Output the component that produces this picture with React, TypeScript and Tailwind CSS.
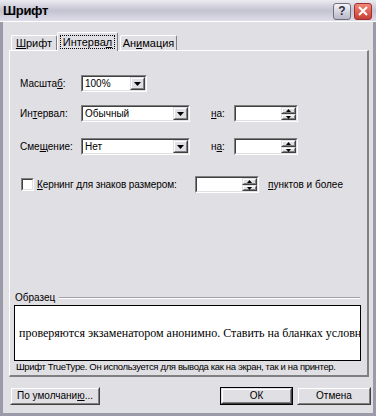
import React from "react";

type Kids = { children?: React.ReactNode; className?: string };

const U = ({ children }: Kids) => <span className="underline underline-offset-[1px]">{children}</span>;

const Down = () => (
  <svg width="7" height="4" viewBox="0 0 7 4">
    <path d="M0 0h7L3.5 4z" fill="#000" />
  </svg>
);

// classic sunken field
const Sunken = ({ children, className }: Kids) => (
  <div className={`border border-t-[#808080] border-l-[#808080] border-b-white border-r-white ${className}`}>
    <div className="h-full flex items-stretch border border-t-[#404040] border-l-[#404040] border-b-[#e0dfe3] border-r-[#e0dfe3] bg-white">
      {children}
    </div>
  </div>
);

// classic raised button face
const Raised = ({ children, className }: Kids) => (
  <div className={`border border-t-[#e0dfe3] border-l-[#e0dfe3] border-b-[#404040] border-r-[#404040] ${className}`}>
    <div className="h-full flex items-center justify-center border border-t-white border-l-white border-b-[#808080] border-r-[#808080] bg-[#e0dfe3]">
      {children}
    </div>
  </div>
);

const Combo = ({ value, className }: { value: string; className: string }) => (
  <Sunken className={`h-[17px] ${className}`}>
    <span className="flex-1 pl-[2px] leading-[13px]">{value}</span>
    <Raised className="w-[15px]">
      <Down />
    </Raised>
  </Sunken>
);

const Spin = ({ className }: Kids) => (
  <Sunken className={`h-[17px] ${className}`}>
    <span className="flex-1" />
    <div className="w-[15px] flex flex-col">
      <Raised className="h-[7px]">
        <svg width="5" height="3" viewBox="0 0 7 4">
          <path d="M0 4h7L3.5 0z" fill="#000" />
        </svg>
      </Raised>
      <Raised className="h-[6px]">
        <svg width="5" height="3" viewBox="0 0 7 4">
          <path d="M0 0h7L3.5 4z" fill="#000" />
        </svg>
      </Raised>
    </div>
  </Sunken>
);

const Button = ({ children, className, def }: Kids & { def?: boolean }) => (
  <div className={`h-[18px] ${def ? "border border-black" : ""} ${className}`}>
    <Raised className="h-full">
      <span className="leading-[12px]">{children}</span>
    </Raised>
  </div>
);

export default function App() {
  return (
    <div className="w-[376px] h-[416px] flex flex-col bg-[#e0dfe3] text-[10px] text-black font-['Liberation_Sans',Arial,sans-serif] overflow-hidden">
      {/* title bar */}
      <div className="h-[22px] flex items-center justify-between pl-[3px] pr-[4px] bg-linear-to-b from-[#ecebf1] via-[#c3c3d1] to-[#dedde8] border-b border-white">
        <span className="text-[13px] font-bold tracking-[-0.3px]">Шрифт</span>
        <div className="flex gap-[3px] pt-[1px]">
          <div className="w-[18px] h-[17px] rounded-[3px] border border-[#707080] bg-linear-to-b from-[#f4f4f8] to-[#b8b8c8] flex items-center justify-center text-[12px] font-bold text-[#303040]">
            ?
          </div>
          <div className="w-[18px] h-[17px] rounded-[3px] border border-[#a03030] bg-linear-to-b from-[#f08878] to-[#c83c34] flex items-center justify-center">
            <svg width="10" height="10" viewBox="0 0 10 10">
              <path d="M1 1L9 9M9 1L1 9" stroke="#fff" strokeWidth="2" />
            </svg>
          </div>
        </div>
      </div>

      {/* window body with frame */}
      <div className="flex-1 flex flex-col border-x-[3px] border-b-[3px] border-x-[#9a9aa8] border-b-[#9a9aa8]">
        {/* tabs */}
        <div className="mt-[10px] ml-[8px] h-[18px] flex items-end">
          <div className="h-[15px] w-[46px] flex items-center justify-center border border-b-0 border-t-white border-l-white border-r-[#808080] bg-[#e0dfe3] rounded-t-[2px]">
            <span className="text-[11px]">
              <U>Ш</U>рифт
            </span>
          </div>
          <div className="relative z-10 -mb-px h-[19px] w-[61px] flex items-center justify-center border border-b-0 border-t-white border-l-white border-r-[#808080] bg-[#e0dfe3] rounded-t-[2px]">
            <span className="text-[11px] px-[2px] border border-dotted border-black leading-[12px]">
              Интерва<U>л</U>
            </span>
          </div>
          <div className="ml-[2px] h-[15px] w-[57px] flex items-center justify-center border border-b-0 border-t-white border-l-white border-r-[#808080] bg-[#e0dfe3] rounded-t-[2px]">
            <span className="text-[11px]">
              Ан<U>и</U>мация
            </span>
          </div>
        </div>

        {/* tab panel */}
        <div className="ml-[6px] w-[360px] h-[327px] flex flex-col border-t border-l border-t-white border-l-white border-r-2 border-b-2 border-r-[#808080] border-b-[#808080]">
          <div className="pl-[10px] pt-[24px] flex flex-col">
            <div className="h-[17px] flex items-center">
              <span className="w-[61px]">
                Масшта<U>б</U>:
              </span>
              <Combo value="100%" className="w-[66px]" />
            </div>
            <div className="mt-[13px] h-[17px] flex items-center">
              <span className="w-[61px]">
                Ин<U>т</U>ервал:
              </span>
              <Combo value="Обычный" className="w-[109px]" />
              <span className="ml-[21px] w-[23px]">
                <U>н</U>а:
              </span>
              <Spin className="w-[64px]" />
            </div>
            <div className="mt-[16px] h-[17px] flex items-center">
              <span className="w-[61px]">
                Сме<U>щ</U>ение:
              </span>
              <Combo value="Нет" className="w-[109px]" />
              <span className="ml-[21px] w-[23px]">
                н<U>а</U>:
              </span>
              <Spin className="w-[64px]" />
            </div>
            <div className="mt-[21px] h-[17px] flex items-center">
              <Sunken className="ml-[1px] w-[13px] h-[13px]" />
              <span className="ml-[3px] w-[158px] tracking-[-0.1px]">
                <U>К</U>ернинг для знаков размером:
              </span>
              <Spin className="w-[64px]" />
              <span className="ml-[9px]">
                <U>п</U>унктов и более
              </span>
            </div>
          </div>

          <div className="flex-1" />

          <div className="flex flex-col pb-[2px]">
            <div className="h-[12px] flex items-center">
              <span className="ml-[5px] leading-[12px]">Образец</span>
              <div className="ml-[4px] mr-[7px] flex-1 border-t border-t-[#a0a0a8] border-b border-b-white" />
            </div>
            <div className="mt-[1px] ml-[4px] w-[347px] h-[56px] border border-black bg-white overflow-hidden flex items-center">
              <span className="pl-[4px] whitespace-nowrap text-[12px] font-['Liberation_Serif',serif]">
                проверяются экзаменатором анонимно. Ставить на бланках условн
              </span>
            </div>
            <div className="ml-[6px] h-[12px] leading-[12px] whitespace-nowrap text-[9.5px] tracking-[-0.35px]">
              Шрифт TrueType. Он используется для вывода как на экран, так и на принтер.
            </div>
          </div>
        </div>

        {/* buttons */}
        <div className="mt-[10px] flex items-center">
          <Button className="ml-[7px] w-[90px]">
            По умолчани<U>ю</U>...
          </Button>
          <Button def className="ml-[120px] w-[73px]">
            ОК
          </Button>
          <Button className="ml-[4px] w-[74px]">Отмена</Button>
        </div>
      </div>
    </div>
  );
}
